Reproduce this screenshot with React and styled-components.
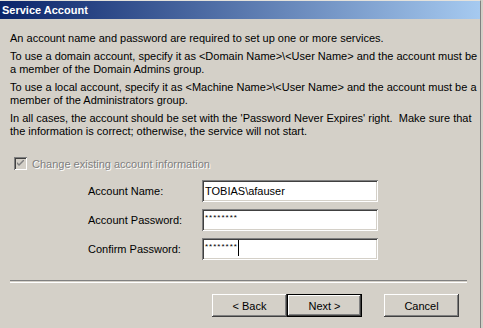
import React from "react";
import styled, { createGlobalStyle } from "styled-components";

const Global = createGlobalStyle`
  html, body { margin: 0; padding: 0; background: #d4d0c8; }
  body { font-family: "Liberation Sans", Arial, sans-serif; font-size: 11px; color: #000; }
`;

const Window = styled.div`
  width: 481px;
  height: 328px;
  background: #d4d0c8;
  border-top: 1px solid #e4e2dc;
  border-right: 1px solid #808080;
  box-sizing: border-box;
  display: flex;
  flex-direction: column;
  overflow: hidden;
`;

const TitleBar = styled.div`
  height: 18px;
  background: linear-gradient(to right, #0a246a, #a6caf0);
  color: #fff;
  font-weight: bold;
  font-size: 11px;
  line-height: 18px;
  padding-left: 2px;
  flex: none;
`;

const Body = styled.div`
  padding: 13px 10px 0 10px;
  display: flex;
  flex-direction: column;
  flex: 1;
`;

const Para = styled.p`
  margin: 0 0 5px 0;
  line-height: 13px;
  white-space: nowrap;
`;

const CheckRow = styled.label`
  display: flex;
  align-items: center;
  gap: 5px;
  margin: 14px 0 0 4px;
  color: #808080;
  text-shadow: 1px 1px 0 #fff;
  height: 13px;
`;

const CheckBox = styled.span`
  width: 13px;
  height: 13px;
  box-sizing: border-box;
  flex: none;
  background: #d4d0c8;
  box-shadow: inset 1px 1px #808080, inset -1px -1px #fff, inset 2px 2px #404040, inset -2px -2px #d4d0c8;
  display: flex;
  align-items: center;
  justify-content: center;
`;

const Form = styled.div`
  display: grid;
  grid-template-columns: 114px 176px;
  grid-auto-rows: 22px;
  row-gap: 7px;
  margin: 10px 0 0 78px;
  align-items: center;
`;

const Label = styled.span`
  white-space: nowrap;
`;

const Field = styled.div`
  height: 22px;
  box-sizing: border-box;
  background: #fff;
  box-shadow: inset 1px 1px #808080, inset -1px -1px #fff, inset 2px 2px #404040, inset -2px -2px #d4d0c8;
  padding: ${(p) => (p.$secret ? "3px 3px 0 3px" : "0 3px")};
  display: flex;
  align-items: ${(p) => (p.$secret ? "flex-start" : "center")};
  font-size: 11px;
  white-space: nowrap;
`;

const Stars = styled.span`
  font-size: 8px;
  letter-spacing: 1px;
  line-height: 12px;
`;

const Caret = styled.span`
  display: inline-block;
  width: 1px;
  height: 16px;
  background: #000;
  margin-top: -1px;
`;

const Separator = styled.div`
  margin: auto 3px 0 0;
  height: 1px;
  border-top: 1px solid #808080;
  border-bottom: 1px solid #fff;
`;

const ButtonRow = styled.div`
  display: flex;
  justify-content: flex-end;
  padding: 11px 21px 11px 0;
`;

const Button = styled.button`
  width: 75px;
  height: 23px;
  margin-left: ${(p) => p.$gap || 0}px;
  border: none;
  background: #d4d0c8;
  font-family: "Liberation Sans", Arial, sans-serif;
  font-size: 11px;
  color: #000;
  padding: 0;
  box-shadow: ${(p) =>
    p.$default
      ? "inset 0 0 0 1px #000, inset -2px -2px #404040, inset 2px 2px #fff, inset -3px -3px #808080"
      : "inset -1px -1px #404040, inset 1px 1px #fff, inset -2px -2px #808080, inset 2px 2px #d4d0c8"};
`;

export default function App() {
  return (
    <>
      <Global />
      <Window>
        <TitleBar>Service Account</TitleBar>
        <Body>
          <Para>An account name and password are required to set up one or more services.</Para>
          <Para>
            To use a domain account, specify it as &lt;Domain Name&gt;\&lt;User Name&gt; and the account must be
            <br />a member of the Domain Admins group.
          </Para>
          <Para>
            To use a local account, specify it as &lt;Machine Name&gt;\&lt;User Name&gt; and the account must be a
            <br />member of the Administrators group.
          </Para>
          <Para>
            In all cases, the account should be set with the 'Password Never Expires' right.&nbsp; Make sure that
            <br />the information is correct; otherwise, the service will not start.
          </Para>
          <CheckRow>
            <CheckBox>
              <svg width="7" height="7" viewBox="0 0 7 7">
                <path d="M0 2 L0 4 L2 6 L7 1 L7 -1 L2 4 Z" fill="#808080" />
              </svg>
            </CheckBox>
            Change existing account information
          </CheckRow>
          <Form>
            <Label>Account Name:</Label>
            <Field>TOBIAS\afauser</Field>
            <Label>Account Password:</Label>
            <Field $secret>
              <Stars>********</Stars>
            </Field>
            <Label>Confirm Password:</Label>
            <Field $secret>
              <Stars>********</Stars>
              <Caret />
            </Field>
          </Form>
          <Separator />
        </Body>
        <ButtonRow>
          <Button>&lt; Back</Button>
          <Button $default>Next &gt;</Button>
          <Button $gap={22}>Cancel</Button>
        </ButtonRow>
      </Window>
    </>
  );
}
